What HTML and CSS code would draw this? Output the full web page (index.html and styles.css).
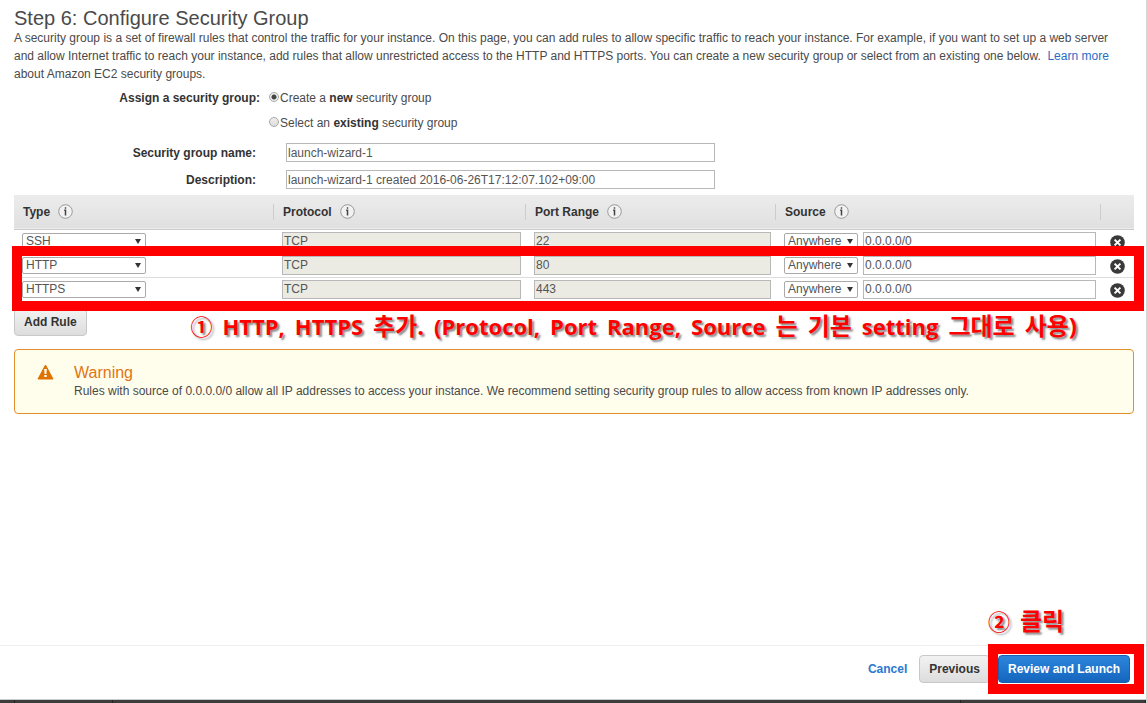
FILE: index.html
```html
<!DOCTYPE html>
<html lang="en">
<head>
<meta charset="utf-8">
<title>Step 6: Configure Security Group</title>
<link rel="stylesheet" href="styles.css">
</head>
<body>
<div class="page">
  <main class="content">
    <h1 class="title">Step 6: Configure Security Group</h1>
    <p class="intro">A security group is a set of firewall rules that control the traffic for your instance. On this page, you can add rules to allow specific traffic to reach your instance. For example, if you want to set up a web server and allow Internet traffic to reach your instance, add rules that allow unrestricted access to the HTTP and HTTPS ports. You can create a new security group or select from an existing one below.&nbsp; <a class="link" href="#">Learn more</a> about Amazon EC2 security groups.</p>

    <form class="group-form">
      <div class="assign" role="radiogroup" aria-labelledby="assign-label">
        <span class="assign-label" id="assign-label">Assign a security group:</span>
        <div class="choices">
          <label class="choice"><input class="radio" type="radio" name="assign" checked><span>Create a <b>new</b> security group</span></label>
          <label class="choice"><input class="radio" type="radio" name="assign"><span>Select an <b>existing</b> security group</span></label>
        </div>
      </div>
      <div class="field">
        <label class="field-label" for="group-name">Security group name:</label>
        <input class="text field-input" id="group-name" type="text" value="launch-wizard-1">
      </div>
      <div class="field">
        <label class="field-label" for="group-desc">Description:</label>
        <input class="text field-input" id="group-desc" type="text" value="launch-wizard-1 created 2016-06-26T17:12:07.102+09:00">
      </div>
    </form>

    <div class="rules-wrap">
      <table class="rules">
        <colgroup><col class="col-type"><col class="col-protocol"><col class="col-port"><col class="col-source"><col class="col-remove"></colgroup>
        <thead>
          <tr>
            <th scope="col"><span class="head">Type <svg class="info" viewBox="0 0 15 15"><circle cx="7.500" cy="7.500" r="6.800"/><path d="M6.200 6.300h1.300V11.500M6.800 4h1.400"/></svg></span></th>
            <th scope="col"><span class="head">Protocol <svg class="info" viewBox="0 0 15 15"><circle cx="7.500" cy="7.500" r="6.800"/><path d="M6.200 6.300h1.300V11.500M6.800 4h1.400"/></svg></span></th>
            <th scope="col"><span class="head">Port Range <svg class="info" viewBox="0 0 15 15"><circle cx="7.500" cy="7.500" r="6.800"/><path d="M6.200 6.300h1.300V11.500M6.800 4h1.400"/></svg></span></th>
            <th scope="col"><span class="head">Source <svg class="info" viewBox="0 0 15 15"><circle cx="7.500" cy="7.500" r="6.800"/><path d="M6.200 6.300h1.300V11.500M6.800 4h1.400"/></svg></span></th>
            <th></th>
          </tr>
        </thead>
        <tbody>
          <tr>
            <td><span class="drop"><select class="select select-type" aria-label="Type"><option>SSH</option></select></span></td>
            <td><input class="text locked" type="text" value="TCP" aria-label="Protocol" readonly></td>
            <td><input class="text locked" type="text" value="22" aria-label="Port range" readonly></td>
            <td><div class="source"><span class="drop"><select class="select select-source" aria-label="Source"><option>Anywhere</option></select></span><input class="text" type="text" value="0.0.0.0/0" aria-label="Source address"></div></td>
            <td><button class="remove" type="button" aria-label="Remove rule"><svg class="cross" viewBox="0 0 15 15"><circle cx="7.500" cy="7.500" r="7.300"/><path d="M4.600 4.600l5.800 5.800M10.400 4.600l-5.800 5.800"/></svg></button></td>
          </tr>
          <tr>
            <td><span class="drop"><select class="select select-type" aria-label="Type"><option>HTTP</option></select></span></td>
            <td><input class="text locked" type="text" value="TCP" aria-label="Protocol" readonly></td>
            <td><input class="text locked" type="text" value="80" aria-label="Port range" readonly></td>
            <td><div class="source"><span class="drop"><select class="select select-source" aria-label="Source"><option>Anywhere</option></select></span><input class="text" type="text" value="0.0.0.0/0" aria-label="Source address"></div></td>
            <td><button class="remove" type="button" aria-label="Remove rule"><svg class="cross" viewBox="0 0 15 15"><circle cx="7.500" cy="7.500" r="7.300"/><path d="M4.600 4.600l5.800 5.800M10.400 4.600l-5.800 5.800"/></svg></button></td>
          </tr>
          <tr>
            <td><span class="drop"><select class="select select-type" aria-label="Type"><option>HTTPS</option></select></span></td>
            <td><input class="text locked" type="text" value="TCP" aria-label="Protocol" readonly></td>
            <td><input class="text locked" type="text" value="443" aria-label="Port range" readonly></td>
            <td><div class="source"><span class="drop"><select class="select select-source" aria-label="Source"><option>Anywhere</option></select></span><input class="text" type="text" value="0.0.0.0/0" aria-label="Source address"></div></td>
            <td><button class="remove" type="button" aria-label="Remove rule"><svg class="cross" viewBox="0 0 15 15"><circle cx="7.500" cy="7.500" r="7.300"/><path d="M4.600 4.600l5.800 5.800M10.400 4.600l-5.800 5.800"/></svg></button></td>
          </tr>
        </tbody>
      </table>
      <div class="frame frame-rules"></div>
    </div>

    <div class="under-table">
      <button class="button add" type="button">Add Rule</button>
      <div class="note">
        <span>①</span> <span>HTTP,</span> <span>HTTPS</span> <span class="ko" lang="ko">추가.</span>
        <span>(Protocol,</span> <span>Port</span> <span>Range,</span> <span>Source</span>
        <span class="ko" lang="ko">는</span> <span class="ko" lang="ko">기본</span> <span>setting</span>
        <span class="ko" lang="ko">그대로</span> <span class="ko" lang="ko">사용)</span>
      </div>
    </div>

    <section class="warning">
      <svg class="warning-icon" viewBox="0 0 17 16"><path class="tri" d="M8.500 1L16 15H1z"/><path class="bang" d="M7.200 5h2.600l-.4 5H7.600zM7.300 11h2.400v2H7.300z"/></svg>
      <div>
        <h2 class="warning-title">Warning</h2>
        <p class="warning-text">Rules with source of 0.0.0.0/0 allow all IP addresses to access your instance. We recommend setting security group rules to allow access from known IP addresses only.</p>
      </div>
    </section>
  </main>

  <footer class="actions">
    <a class="cancel" href="#">Cancel</a>
    <button class="button" type="button">Previous</button>
    <div class="launch">
      <button class="button primary" type="button">Review and Launch</button>
      <div class="frame frame-launch"></div>
      <div class="note note-launch"><span>②</span> <span class="ko" lang="ko">클릭</span></div>
    </div>
  </footer>
  <div class="bar"><span></span><span></span><span></span><span></span></div>
</div>
</body>
</html>
```
FILE: styles.css
```css
* { box-sizing: border-box; }

body {
  margin: 0;
  background: #fff;
  color: #4a4a4a;
  font-family: "Liberation Sans", Arial, sans-serif;
  font-size: 12px;
}

input, select, button { font: inherit; color: inherit; margin: 0; }

.page {
  display: flex;
  flex-direction: column;
  min-height: 100vh;
  border-right: 1px solid #d5d5d5;
}

.content { flex: 1; padding: 7px 12px 0 14px; }

.title { margin: 0; font-size: 20px; font-weight: 400; line-height: 22px; }

.intro { margin: 0; padding-right: 16px; line-height: 18px; }

.link { color: #2a6cc4; text-decoration: none; }

b { color: #333; }

.group-form { padding-top: 6px; }

.assign { display: flex; margin-bottom: 7px; }

.assign-label, .field-label {
  color: #333;
  font-weight: 700;
  text-align: right;
  line-height: 18px;
}

.assign-label { width: 246px; }

.choices { display: flex; flex-direction: column; gap: 7px; padding-left: 9px; }

.choice { display: flex; line-height: 18px; }

.radio {
  appearance: none;
  width: 10px;
  height: 10px;
  margin: 3px 1px 0 0;
  border: 1px solid #a8a8a8;
  border-radius: 50%;
  background: linear-gradient(#eee, #ddd);
}

.radio:checked { background: radial-gradient(circle, #444 0 2px, #eee 3px); }

.field { display: flex; align-items: center; height: 27px; }

.field-label { width: 242px; margin-right: 30px; }

.text {
  width: 100%;
  height: 19px;
  padding: 0 1px;
  border: 1px solid #b8b8b8;
  border-radius: 0;
  background: #fff;
  color: #555;
}

.field-input { width: 429px; }

.locked { background: #ebebe4; }

.rules-wrap { position: relative; margin-top: 2px; }

.rules { width: 100%; border-collapse: collapse; table-layout: fixed; }

.col-type { width: 260px; }
.col-protocol { width: 252px; }
.col-port { width: 250px; }
.col-remove { width: 33px; }

.rules thead tr {
  height: 34px;
  background: linear-gradient(#ececec, #e0e0e0);
  border-bottom: 1px solid #ccc;
}

.rules th {
  padding: 0 0 0 9px;
  color: #333;
  text-align: left;
  background: linear-gradient(#ccc, #ccc) right center / 1px 16px no-repeat;
}

.rules th:last-child { background: none; }

.head { display: flex; align-items: center; gap: 8px; }

.info { width: 15px; height: 15px; fill: #f2f2f2; stroke: #999; }

.info path { fill: none; stroke: #444; stroke-width: 1.500; }

.rules tbody tr { height: 24px; border-bottom: 1px solid #ddd; }

.rules td { padding: 0 5px 0 8px; vertical-align: middle; }

.drop { display: inline-block; position: relative; vertical-align: middle; }

.drop::after {
  content: "";
  position: absolute;
  right: 5px;
  top: 6px;
  border: 3px solid transparent;
  border-top: 5px solid #333;
  border-bottom: 0;
  pointer-events: none;
}

.select {
  display: block;
  appearance: none;
  height: 17px;
  padding: 0 3px;
  border: 1px solid #aaa;
  border-radius: 2px;
  background: #fff;
  color: #555;
}

.select-type { width: 124px; }
.select-source { width: 74px; }

.source { display: flex; align-items: center; gap: 5px; }

.rules td .text { display: block; }

.rules td:last-child { padding: 0; }

.remove {
  display: block;
  margin: 2px auto 0;
  padding: 0;
  border: 0;
  background: none;
}

.cross { display: block; width: 15px; height: 15px; fill: #3a3a3a; }

.cross path { stroke: #fff; stroke-width: 2; }

.frame { position: absolute; border: 10px solid #f00; pointer-events: none; }

.frame-rules { inset: 51px -10px -9px -2px; }

.under-table { display: flex; justify-content: space-between; padding-top: 6px; }

.button {
  height: 28px;
  padding: 0 9px;
  border: 1px solid #c8c8c8;
  border-radius: 4px;
  background: linear-gradient(#f2f2f2, #ddd);
  color: #333;
  font-weight: 700;
}

.note {
  display: flex;
  align-items: baseline;
  gap: 10px;
  color: #f00;
  font-family: "Open Sans", "Noto Sans CJK KR", sans-serif;
  font-size: 22px;
  font-weight: 700;
  line-height: 28px;
  text-shadow: 2px 2px 2px #888;
  white-space: nowrap;
}

.ko { font-size: 24px; }

.under-table .note { margin: 4px 57px 0 0; }

.warning {
  display: flex;
  gap: 20px;
  margin-top: 9px;
  padding: 14px 22px 13px;
  border: 1px solid #e48f2d;
  border-radius: 4px;
  background: #fffdec;
}

.warning-icon { flex: none; width: 17px; height: 16px; }

.tri { fill: #df7300; stroke: #df7300; stroke-linejoin: round; }
.bang { fill: #fff; }

.warning-title { margin: 0; color: #df7514; font-size: 16px; font-weight: 400; line-height: 18px; }

.warning-text { margin: 0; line-height: 18px; }

.actions {
  display: flex;
  align-items: center;
  justify-content: flex-end;
  padding: 9px 16px 16px;
  border-top: 1px solid #eee;
}

.cancel { margin-right: 12px; color: #2a78d2; font-weight: 700; text-decoration: none; }

.launch { position: relative; margin-left: 8px; }

.primary {
  border-color: #1a5fae;
  background: linear-gradient(#2d86dc, #1565bd);
  color: #fff;
}

.frame-launch { inset: -11px -14px -11px -10px; }

.note-launch { position: absolute; left: -10px; bottom: 48px; }

.bar {
  display: grid;
  grid-template-columns: 15px 98px 1fr 185px;
  height: 4px;
  border-top: 1px solid #ccc;
  background: #3c3c3c;
}

.bar span { border-right: 1px solid #222; }
```
